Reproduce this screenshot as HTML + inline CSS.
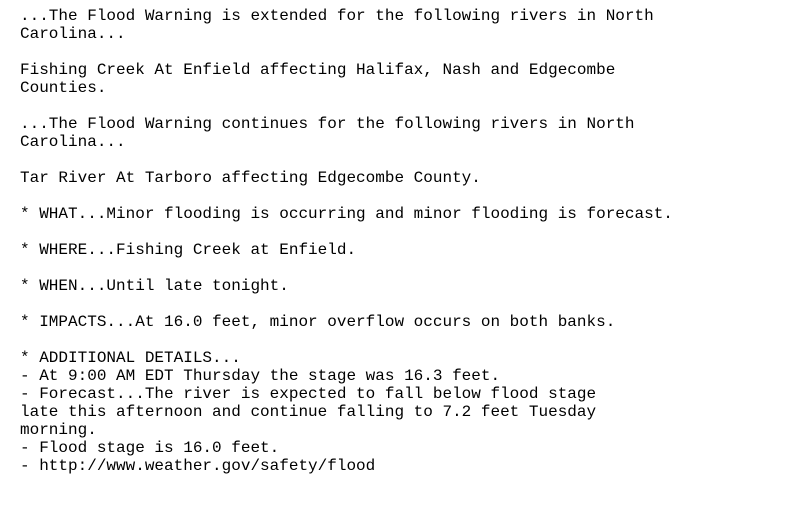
<!DOCTYPE html>
<html><head><style>
html,body{margin:0;padding:0;background:#fff;width:800px;height:508px;overflow:hidden}
pre{position:absolute;left:20px;top:7px;margin:0;font-family:"Liberation Mono",monospace;font-size:16px;line-height:18px;color:#000}
</style></head><body><pre>...The Flood Warning is extended for the following rivers in North
Carolina...

Fishing Creek At Enfield affecting Halifax, Nash and Edgecombe
Counties.

...The Flood Warning continues for the following rivers in North
Carolina...

Tar River At Tarboro affecting Edgecombe County.

* WHAT...Minor flooding is occurring and minor flooding is forecast.

* WHERE...Fishing Creek at Enfield.

* WHEN...Until late tonight.

* IMPACTS...At 16.0 feet, minor overflow occurs on both banks.

* ADDITIONAL DETAILS...
- At 9:00 AM EDT Thursday the stage was 16.3 feet.
- Forecast...The river is expected to fall below flood stage
late this afternoon and continue falling to 7.2 feet Tuesday
morning.
- Flood stage is 16.0 feet.
- http://www.weather.gov/safety/flood
</pre></body></html>
